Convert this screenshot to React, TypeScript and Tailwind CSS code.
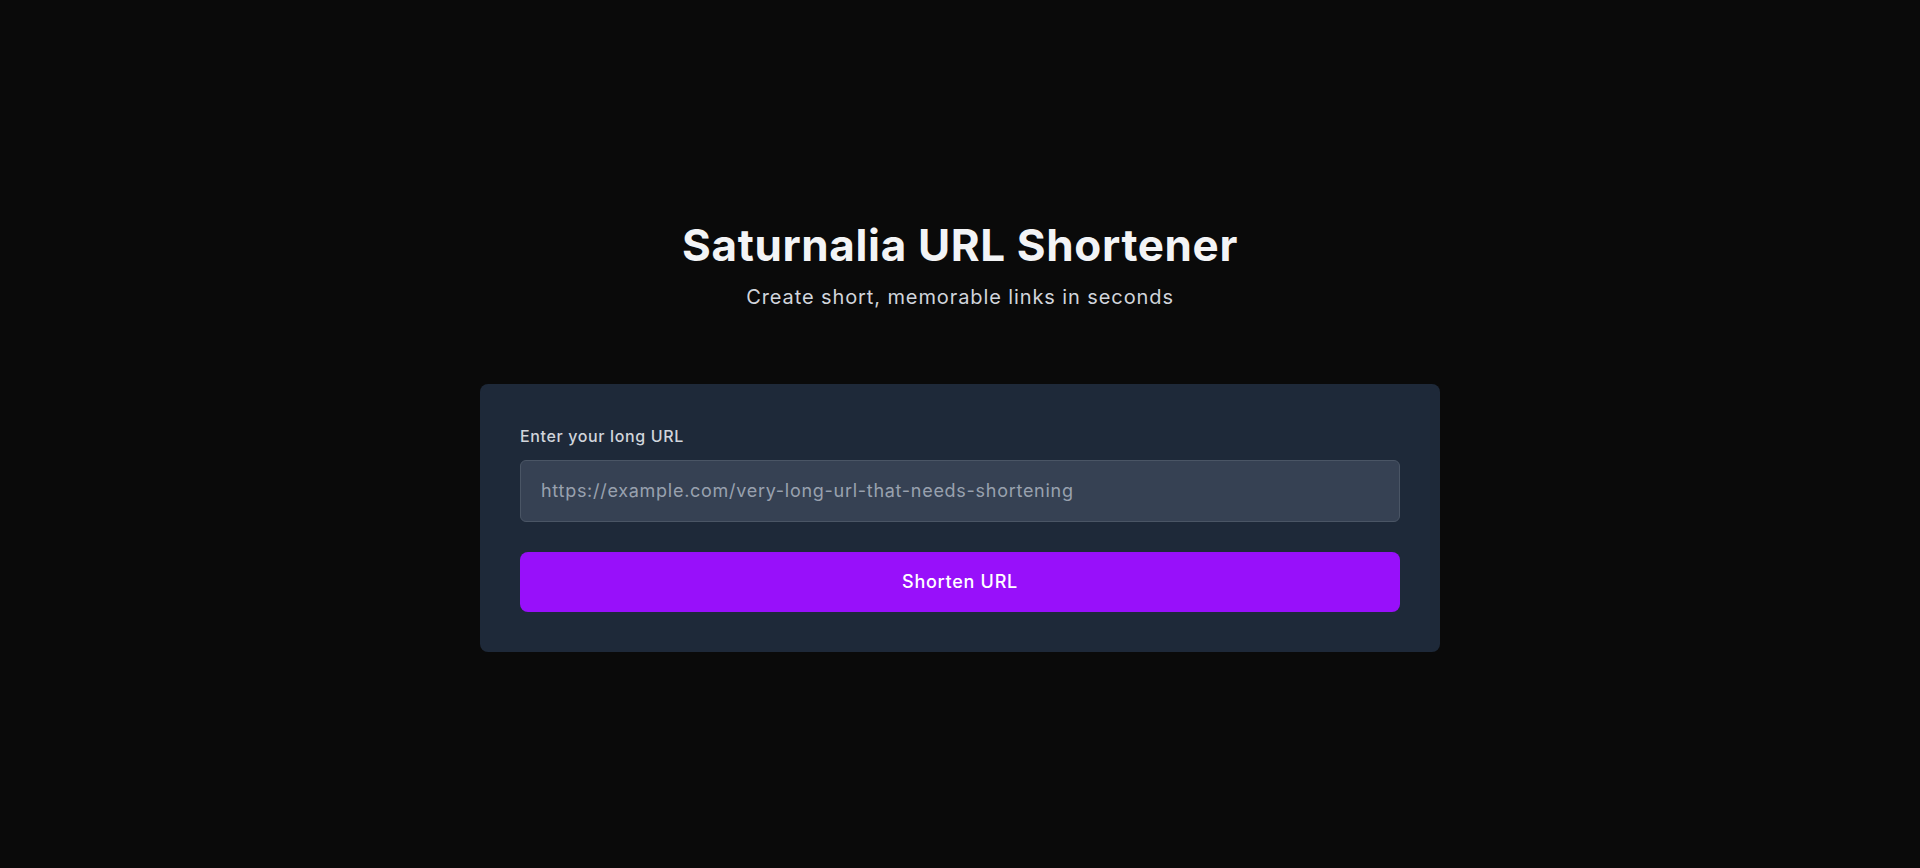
import { useState } from 'react'

export default function App() {
  const [url, setUrl] = useState('')

  return (
    <div className="min-h-screen bg-[#0a0a0a] flex items-center justify-center px-4 pt-1 font-['Inter',sans-serif] tracking-[0.04em]">
      <div className="w-full max-w-[960px]">
        <div className="text-center mb-[73px]">
          <h1 className="text-[44px] leading-[48px] font-bold text-gray-100">
            Saturnalia URL Shortener
          </h1>
          <p className="mt-3.5 text-xl tracking-[0.045em] text-gray-300">Create short, memorable links in seconds</p>
        </div>

        <div className="bg-gray-800 rounded-lg p-10">
          <form
            className="flex flex-col"
            onSubmit={(e) => {
              e.preventDefault()
            }}
          >
            <label htmlFor="url" className="text-base font-medium text-gray-300 mb-3">
              Enter your long URL
            </label>
            <input
              id="url"
              type="url"
              value={url}
              onChange={(e) => setUrl(e.target.value)}
              placeholder="https://example.com/very-long-url-that-needs-shortening"
              className="w-full bg-gray-700 border border-gray-600 rounded-md px-5 py-4 text-lg tracking-[0.04em] text-white placeholder-gray-400 outline-none"
            />
            <button
              type="submit"
              className="mt-[30px] w-full bg-purple-600 rounded-lg py-4 text-lg font-medium tracking-[0.04em] text-white"
            >
              Shorten URL
            </button>
          </form>
        </div>
      </div>
    </div>
  )
}
